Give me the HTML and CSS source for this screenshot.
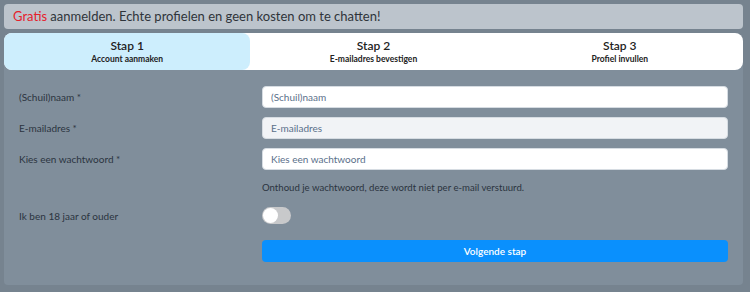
FILE: index.html
```html
<!DOCTYPE html>
<html>
<head>
  <title>Aanmelden</title>
  <meta charset="UTF-8"/>
  <link rel="stylesheet" href="styles.css">
</head>

<body>
<div class="page">
  <div class="banner">
    <span class="free">Gratis</span> aanmelden. Echte profielen en geen kosten om te chatten!
  </div>

  <div class="card">
    <!-- stappen -->
    <div class="steps">
      <div class="step active">
        <div class="step-title">Stap 1</div>
        <div class="step-sub">Account aanmaken</div>
      </div>
      <div class="step">
        <div class="step-title">Stap 2</div>
        <div class="step-sub">E-mailadres bevestigen</div>
      </div>
      <div class="step">
        <div class="step-title">Stap 3</div>
        <div class="step-sub">Profiel invullen</div>
      </div>
    </div>

    <!-- formulier -->
    <form class="form">
      <div class="row row-name">
        <label for="name">(Schuil)naam *</label>
        <input id="name" type="text" placeholder="(Schuil)naam"/>
      </div>
      <div class="row row-mail">
        <label for="mail">E-mailadres *</label>
        <input id="mail" class="muted" type="email" placeholder="E-mailadres"/>
      </div>
      <div class="row row-pass">
        <label for="pass">Kies een wachtwoord *</label>
        <input id="pass" type="password" placeholder="Kies een wachtwoord"/>
      </div>
      <div class="row row-hint">
        <span></span>
        <p class="hint">Onthoud je wachtwoord, deze wordt niet per e-mail verstuurd.</p>
      </div>
      <div class="row row-age">
        <label for="age">Ik ben 18 jaar of ouder</label>
        <div><span class="switch"><span class="knob"></span></span></div>
      </div>
      <div class="row row-submit">
        <span></span>
        <button type="button" class="next">Volgende stap</button>
      </div>
    </form>
  </div>
</div>
</body>
</html>
```

FILE: styles.css
```css
* {
  box-sizing: border-box;
}

body {
  margin: 0;
  background-color: #76838f;
  font-family: Lato, "Noto Sans", sans-serif;
  color: #2b3440;
}

.page {
  padding: 4px 7px 6px 4px;
}

/* bovenste balk */
.banner {
  height: 25px;
  margin-bottom: 4px;
  padding: 0 9px;
  background-color: #bcc4cc;
  border-radius: 4px;
  font-size: 13px;
  line-height: 25px;
  color: #2f343a;
}

.free {
  color: #e5212b;
}

.card {
  background-color: #808e9b;
  border-radius: 8px 8px 4px 4px;
}

/* stappen */
.steps {
  display: grid;
  grid-template-columns: repeat(3, 1fr);
  height: 37px;
  background-color: #fff;
  border-radius: 8px;
}

.step {
  display: flex;
  flex-direction: column;
  align-items: center;
  justify-content: center;
  color: #222;
  border-radius: 8px;
}

.step.active {
  background-color: #cdeefd;
}

.step-title {
  font-size: 12px;
  font-weight: 600;
  line-height: 16px;
}

.step-sub {
  font-size: 8.5px;
  font-weight: 700;
  line-height: 11px;
}

/* formulier */
.form {
  padding: 16px 15px 23px 15px;
}

.row {
  display: grid;
  grid-template-columns: 243px 1fr;
  align-items: center;
  font-size: 10px;
}

.row label {
  color: #2b3440;
}

.row-name,
.row-mail {
  margin-bottom: 9px;
}

.row-pass {
  margin-bottom: 10px;
}

.row-hint {
  margin-bottom: 11px;
}

.row-age {
  margin-bottom: 16px;
}

input {
  height: 22px;
  padding: 0 8px;
  border: 1px solid #d6dce2;
  border-radius: 4px;
  background-color: #fff;
  font-family: inherit;
  font-size: 10px;
  color: #2b3440;
}

input::placeholder {
  color: #5a708a;
}

input.muted {
  background-color: #f1f3f6;
}

.hint {
  margin: 0;
  height: 16px;
  line-height: 16px;
  font-size: 9.6px;
  color: #2b3440;
}

.switch {
  display: inline-block;
  position: relative;
  width: 29px;
  height: 17px;
  vertical-align: top;
  background-color: #c8c9cb;
  border-radius: 9px;
}

.knob {
  position: absolute;
  left: 1px;
  top: 1px;
  width: 15px;
  height: 15px;
  background-color: #fff;
  border-radius: 50%;
}

.next {
  height: 22px;
  border: none;
  border-radius: 4px;
  background-color: #0a90fd;
  color: #fff;
  font-family: inherit;
  font-size: 10px;
  font-weight: 600;
  cursor: pointer;
}
```
